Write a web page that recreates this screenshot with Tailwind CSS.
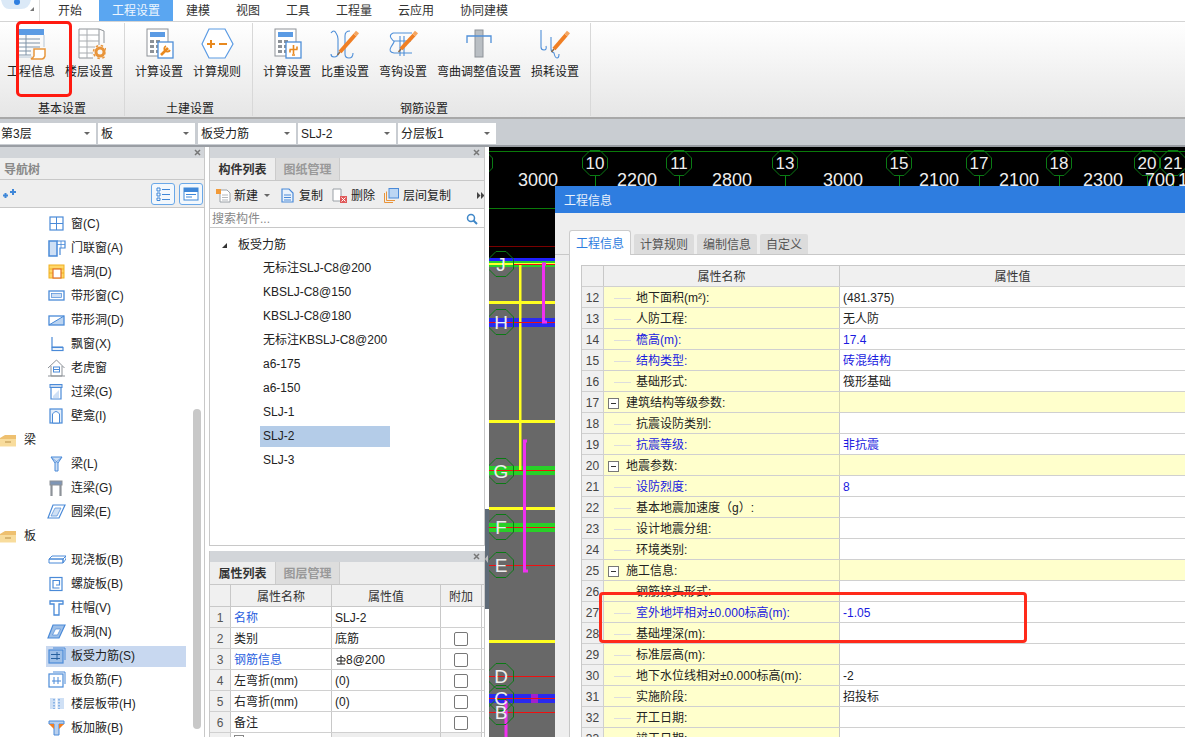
<!DOCTYPE html>
<html lang="zh"><head><meta charset="utf-8"><script src="https://cdn.jsdelivr.net/npm/@tailwindcss/browser@4"></script></head>
<body class="relative w-[1185px] h-[737px] overflow-hidden bg-white text-[12px] leading-none text-[#222] font-['Liberation_Sans','Noto_Sans_CJK_SC',sans-serif]">

<!-- menu -->
<div class="flex h-[22px] items-center border-b border-[#d4d4d4] bg-white text-[#333]">
  <div class="relative h-full w-[40px] border-r border-[#ddd]">
    <svg class="w-[36px] h-[21px]" viewBox="0 0 36 21"><path d="M1 0h30q-2 9-10 9H9Q3 9 1 0z" fill="#dbe9f7"/><circle cx="17" cy="2" r="3" fill="#2f7fe0"/><path d="M30 11l4 0 0-4z" fill="#777"/></svg>
  </div>
  <span class="ml-[18px]">开始</span>
  <span class="ml-[17px] flex h-full w-[74px] items-center justify-center bg-[#5aa6f1] text-[#eef6ff]">工程设置</span>
  <span class="ml-[13px]">建模</span><span class="ml-[26px]">视图</span><span class="ml-[26px]">工具</span><span class="ml-[26px]">工程量</span><span class="ml-[26px]">云应用</span><span class="ml-[26px]">协同建模</span>
</div>

<!-- ribbon -->
<div class="flex h-[97px] border-b-2 border-[#a8a8a8] bg-gradient-to-b from-white to-[#e6e6e6]">
  <div class="flex w-[125px] flex-col border-r border-[#d8d8d8] my-[1px]">
    <div class="flex gap-[10px] pl-[7px] pt-[4px]">
      <div class="flex w-[48px] flex-col items-center">
        <svg class="w-[34px] h-[34px]" viewBox="0 0 34 34"><rect x="4" y="2" width="26" height="6" fill="#5b9be4"/><path d="M4 8v22h14M30 8v12" fill="#fff" stroke="#b5c5d5"/><path d="M4 12h22M4 16h22M4 20h22M4 24h13M4 28h13M12 8v20" stroke="#7f93a8" fill="none"/><path d="M20 22h11v7q-1 3-3 3H17q2-1 3-3z" fill="#fff" stroke="#e8963c" stroke-width="1.5"/></svg>
        <span class="mt-[5px]">工程信息</span>
      </div>
      <div class="flex w-[48px] flex-col items-center">
        <svg class="w-[34px] h-[34px]" viewBox="0 0 34 34"><path d="M7 2h20v16M7 2v29h14" fill="#fff" stroke="#8f9499"/><path d="M7 8h20M7 14h20M7 20h16M7 26h14M15 2v29" stroke="#a8acb0" fill="none"/><path d="M27 2l5 2v12" fill="none" stroke="#8f9499"/><circle cx="28" cy="25" r="4" fill="none" stroke="#e8943a" stroke-width="3"/><circle cx="28" cy="25" r="6.5" fill="none" stroke="#e8943a" stroke-width="1.5" stroke-dasharray="2.5 2.6"/></svg>
        <span class="mt-[5px]">楼层设置</span>
      </div>
    </div>
    <span class="mt-auto mb-[1px] pl-[38px]">基本设置</span>
  </div>
  <div class="flex w-[128px] flex-col border-r border-[#d8d8d8] my-[1px]">
    <div class="flex gap-[10px] pl-[10px] pt-[4px]">
      <div class="flex w-[48px] flex-col items-center">
        <svg class="w-[34px] h-[34px]" viewBox="0 0 34 34"><rect x="5" y="2" width="21" height="27" fill="#fff" stroke="#8d9298"/><rect x="8" y="5" width="15" height="5" fill="#5b9be4"/><path d="M8 13h4v3H8zM14 13h4v3h-4zM8 18h4v3H8zM14 18h4v3h-4zM8 23h4v3H8zM14 23h4v3h-4z" fill="#8d9298"/><rect x="16" y="15" width="15" height="16" fill="#fff" stroke="#4f8fd8" stroke-width="1.3"/><path d="M19 28l7-7" stroke="#e8891f" stroke-width="2.6"/><path d="M24 19a3 3 0 1 0 4 4" fill="none" stroke="#e8891f" stroke-width="1.8"/></svg>
        <span class="mt-[5px]">计算设置</span>
      </div>
      <div class="flex w-[48px] flex-col items-center">
        <svg class="w-[34px] h-[34px]" viewBox="0 0 34 34"><path d="M9 2h16l8 15-8 14H9L2 17z" fill="#fff" stroke="#5b9be4" stroke-width="1.2"/><path d="M7 17h8M11 13v8M19 17h8" stroke="#e8891f" stroke-width="2"/></svg>
        <span class="mt-[5px]">计算规则</span>
      </div>
    </div>
    <span class="mt-auto mb-[1px] pl-[41px]">土建设置</span>
  </div>
  <div class="flex w-[338px] flex-col border-r border-[#d8d8d8] my-[1px]">
    <div class="flex gap-[10px] pl-[10px] pt-[4px]">
      <div class="flex w-[48px] flex-col items-center">
        <svg class="w-[34px] h-[34px]" viewBox="0 0 34 34"><rect x="5" y="2" width="21" height="27" fill="#fff" stroke="#8d9298"/><rect x="8" y="5" width="15" height="5" fill="#5b9be4"/><path d="M8 13h4v3H8zM14 13h4v3h-4zM8 18h4v3H8zM14 18h4v3h-4zM8 23h4v3H8zM14 23h4v3h-4z" fill="#8d9298"/><rect x="16" y="15" width="15" height="16" fill="#fff" stroke="#4f8fd8" stroke-width="1.3"/><path d="M23.5 18v9M19.5 22.5h8M20 22.5v3M27 19.5v3M22 28h3" stroke="#e8891f" stroke-width="1.6" fill="none"/></svg>
        <span class="mt-[5px]">计算设置</span>
      </div>
      <div class="flex w-[48px] flex-col items-center">
        <svg class="w-[34px] h-[34px]" viewBox="0 0 34 34"><path d="M3 6q3-4 5 0 2 3 2 6v14q0 4-4 4-3 0-3-3M22 4q-5 0-5 5v18q0 4 4 4t4-5" fill="none" stroke="#4f8fd8" stroke-width="1.1"/><path d="M12 25L27 8" stroke="#f07f24" stroke-width="4"/><path d="M27 8l2.500-3" stroke="#f5a560" stroke-width="4"/><path d="M12 25l-2.500 3" stroke="#8a6a4a" stroke-width="1.500"/></svg>
        <span class="mt-[5px]">比重设置</span>
      </div>
      <div class="flex w-[48px] flex-col items-center">
        <svg class="w-[34px] h-[34px]" viewBox="0 0 34 34"><path d="M7 6h19M7 6q-4 2-2 5t3 3-3 6q-3 5 3 6h18M7 14h18M14 9v20M18 9v20" fill="none" stroke="#4f8fd8" stroke-width="1.1"/><path d="M15 22L28 8" stroke="#f07f24" stroke-width="4"/><path d="M28 8l2.500-3" stroke="#f5a560" stroke-width="4"/><path d="M15 22l-2.500 3" stroke="#8a6a4a" stroke-width="1.500"/></svg>
        <span class="mt-[5px]">弯钩设置</span>
      </div>
      <div class="flex w-[84px] flex-col items-center">
        <svg class="w-[34px] h-[34px]" viewBox="0 0 34 34"><rect x="13" y="3" width="8" height="27" fill="#b9bec3" stroke="#8d9298"/><path d="M5 16V9h24v7" fill="none" stroke="#4f8fd8" stroke-width="1.3"/></svg>
        <span class="mt-[5px]">弯曲调整值设置</span>
      </div>
      <div class="flex w-[48px] flex-col items-center">
        <svg class="w-[34px] h-[34px]" viewBox="0 0 34 34"><path d="M3 3v17q0 3 3 3t2-4M13 10v12q0 3 3 4 1 5 3 5t2-4" fill="none" stroke="#4f8fd8" stroke-width="1.1"/><path d="M16 22L28 8" stroke="#f07f24" stroke-width="4"/><path d="M28 8l2.500-3" stroke="#f5a560" stroke-width="4"/><path d="M16 22l-2.500 3" stroke="#8a6a4a" stroke-width="1.500"/></svg>
        <span class="mt-[5px]">损耗设置</span>
      </div>
    </div>
    <span class="mt-auto mb-[1px] pl-[147px]">钢筋设置</span>
  </div>
</div>

<!-- selector bar -->
<div class="flex h-[28px] items-center gap-[2px] border-b-2 border-[#9a9ea4] bg-[#c9cdd2] pt-[3px]">
  <div class="flex h-[21px] w-[96px] items-center justify-between bg-white pl-[1px] pr-[6px]"><span>第3层</span><i class="border-x-[3px] border-t-[3px] border-x-transparent border-t-[#666]"></i></div>
  <div class="flex h-[21px] w-[97px] items-center justify-between bg-white pl-[3px] pr-[6px]"><span>板</span><i class="border-x-[3px] border-t-[3px] border-x-transparent border-t-[#666]"></i></div>
  <div class="ml-[1px] flex h-[21px] w-[98px] items-center justify-between bg-white pl-[3px] pr-[6px]"><span>板受力筋</span><i class="border-x-[3px] border-t-[3px] border-x-transparent border-t-[#666]"></i></div>
  <div class="flex h-[21px] w-[98px] items-center justify-between bg-white pl-[3px] pr-[6px]"><span>SLJ-2</span><i class="border-x-[3px] border-t-[3px] border-x-transparent border-t-[#666]"></i></div>
  <div class="flex h-[21px] w-[98px] items-center justify-between bg-white pl-[3px] pr-[6px]"><span>分层板1</span><i class="border-x-[3px] border-t-[3px] border-x-transparent border-t-[#666]"></i></div>
</div>

<!-- main -->
<div class="flex h-[590px] overflow-hidden">
  <!-- nav -->
  <div class="relative w-[205px] shrink-0 overflow-hidden border-r border-[#c8c8c8]">
    <div class="flex h-[11px] items-center justify-end bg-[#d2d5d9] pr-[3px] text-[#777]"><svg class="w-[7px] h-[7px]" viewBox="0 0 7 7"><path d="M1 1l5 5M6 1L1 6" stroke="#777" stroke-width="1.5"/></svg></div>
    <div class="flex h-[22px] items-center border-b border-[#c8c8c8] bg-[#eee] pl-[4px] pt-[2px] font-bold text-[#888]">导航树</div>
    <div class="flex h-[28px] items-center border-b border-[#c8c8c8] bg-[#eee] pl-[3px]">
      <svg class="w-[13px] h-[10px]" viewBox="0 0 13 10"><path d="M0 6.5h5M2.5 4v5M7 3h6M10 0v6" stroke="#3f87d8" stroke-width="2"/></svg>
      <span class="ml-auto flex h-[22px] w-[24px] items-center justify-center rounded-[3px] border border-[#6aa8e8] bg-[#f3f8fd]"><svg class="w-[14px] h-[14px]" viewBox="0 0 14 14"><path d="M1 1h3v3H1zM1 6h3v3H1zM1 11h3v2.500H1z" fill="none" stroke="#3f87d8"/><path d="M6 2.500h8M6 7.500h8M6 12.500h8" stroke="#3f87d8"/></svg></span>
      <span class="ml-[4px] mr-[1px] flex h-[22px] w-[24px] items-center justify-center rounded-[3px] border border-[#6aa8e8] bg-[#f3f8fd]"><svg class="w-[16px] h-[14px]" viewBox="0 0 16 14"><rect x="1" y="1" width="14" height="12" fill="#fff" stroke="#3f87d8"/><rect x="1" y="1" width="14" height="4" fill="#3f87d8"/><path d="M3 7.500h10M3 10h6" stroke="#3f87d8"/></svg></span>
    </div>
    <div class="pt-[4px]">
      <div class="flex h-6 items-center pl-[46px]"><svg class="w-[20px] h-[20px]" viewBox="0 0 20 20"><rect x="4" y="3" width="13" height="13" fill="#fff" stroke="#4a8ad8" stroke-width="1.200"/><path d="M10.500 3v13M4 9.500h13" stroke="#4a8ad8"/></svg><span class="ml-[5px]">窗(C)</span></div>
      <div class="flex h-6 items-center pl-[46px]"><svg class="w-[20px] h-[20px]" viewBox="0 0 20 20"><rect x="3" y="3" width="8" height="15" fill="#cfe0f5" stroke="#4a8ad8" stroke-width="1.500"/><path d="M11 3h8v7h-5v7" fill="none" stroke="#4a8ad8" stroke-width="1.200"/><path d="M15 3v7M11 6.500h8" stroke="#4a8ad8" stroke-width=".8"/></svg><span class="ml-[5px]">门联窗(A)</span></div>
      <div class="flex h-6 items-center pl-[46px]"><svg class="w-[20px] h-[20px]" viewBox="0 0 20 20"><rect x="3" y="3" width="15" height="13" fill="#ffd76a" stroke="#f0b020"/><path d="M3 7h15M3 11h15" stroke="#f0b020"/><rect x="7" y="7" width="8" height="9" fill="#fff" stroke="#e2702a" stroke-width="1.200"/></svg><span class="ml-[5px]">墙洞(D)</span></div>
      <div class="flex h-6 items-center pl-[46px]"><svg class="w-[20px] h-[20px]" viewBox="0 0 20 20"><rect x="3" y="5" width="15" height="9" fill="#fff" stroke="#4a8ad8" stroke-width="1.300"/><rect x="5.500" y="7.500" width="10" height="4" fill="#cfe0f5" stroke="#4a8ad8" stroke-width=".7"/></svg><span class="ml-[5px]">带形窗(C)</span></div>
      <div class="flex h-6 items-center pl-[46px]"><svg class="w-[20px] h-[20px]" viewBox="0 0 20 20"><path d="M3 14.500L18 6v9H3z" fill="#bcd4f0"/><rect x="3" y="6" width="15" height="9" fill="none" stroke="#4a8ad8" stroke-width="1.300"/><path d="M3 15L18 6" stroke="#4a8ad8"/></svg><span class="ml-[5px]">带形洞(D)</span></div>
      <div class="flex h-6 items-center pl-[46px]"><svg class="w-[20px] h-[20px]" viewBox="0 0 20 20"><path d="M6 3v10h11" fill="none" stroke="#4a8ad8" stroke-width="1.200"/><rect x="6" y="13.500" width="11" height="3" fill="#fff" stroke="#4a8ad8" stroke-width="1.200"/></svg><span class="ml-[5px]">飘窗(X)</span></div>
      <div class="flex h-6 items-center pl-[46px]"><svg class="w-[20px] h-[20px]" viewBox="0 0 20 20"><path d="M2 10l8.500-8 8 8M5 8v10h11V8M2 18h17" fill="none" stroke="#8d9298"/><rect x="7.500" y="9" width="6" height="5" fill="#fff" stroke="#4a8ad8"/><path d="M7.500 11.500h6" stroke="#4a8ad8"/></svg><span class="ml-[5px]">老虎窗</span></div>
      <div class="flex h-6 items-center pl-[46px]"><svg class="w-[20px] h-[20px]" viewBox="0 0 20 20"><rect x="4" y="2.500" width="12" height="3" fill="#c7d9f0" stroke="#4a8ad8"/><path d="M5 6v11h10V6" fill="#fff" stroke="#4a8ad8" stroke-width="1.200"/><path d="M7 14l6-6v8H7z" fill="#cfe0f5"/></svg><span class="ml-[5px]">过梁(G)</span></div>
      <div class="flex h-6 items-center pl-[46px]"><svg class="w-[20px] h-[20px]" viewBox="0 0 20 20"><rect x="4" y="3" width="12" height="14" fill="#e4eefa" stroke="#4a8ad8" stroke-width="1.200"/><path d="M6.500 17V8q3.500-5 7 0v9z" fill="#fff" stroke="#4a8ad8"/></svg><span class="ml-[5px]">壁龛(I)</span></div>
      <div class="flex h-6 items-center"><svg class="w-[16px] h-[13px]" viewBox="0 0 16 13"><path d="M0 4l5-3h11v11H0z" fill="#eec070"/><path d="M0 5h16v7.500H0z" fill="#f8dc9c"/><path d="M5 8h6" stroke="#b89048"/></svg><span class="ml-[8px]">梁</span></div>
      <div class="flex h-6 items-center pl-[46px]"><svg class="w-[20px] h-[20px]" viewBox="0 0 20 20"><path d="M5 3h11l-4 6v8H9V9z" fill="#cfe0f5" stroke="#4a8ad8"/><path d="M5 3l7 6M16 3L9 9" stroke="#4a8ad8" stroke-width=".7"/></svg><span class="ml-[5px]">梁(L)</span></div>
      <div class="flex h-6 items-center pl-[46px]"><svg class="w-[20px] h-[20px]" viewBox="0 0 20 20"><rect x="4" y="3" width="12" height="4" fill="#7e95b5" stroke="#8d9298"/><path d="M5.500 7v11M14.500 7v11" stroke="#8d9298" stroke-width="2.200"/></svg><span class="ml-[5px]">连梁(G)</span></div>
      <div class="flex h-6 items-center pl-[46px]"><svg class="w-[20px] h-[20px]" viewBox="0 0 20 20"><path d="M7 3h12l-6 13H2z" fill="#fff" stroke="#4a8ad8" stroke-width="1.200"/><path d="M9 6h6l-4 8H5z" fill="#cfe0f5" stroke="#4a8ad8" stroke-width=".7"/></svg><span class="ml-[5px]">圆梁(E)</span></div>
      <div class="flex h-6 items-center"><svg class="w-[16px] h-[13px]" viewBox="0 0 16 13"><path d="M0 4l5-3h11v11H0z" fill="#eec070"/><path d="M0 5h16v7.500H0z" fill="#f8dc9c"/><path d="M5 8h6" stroke="#b89048"/></svg><span class="ml-[8px]">板</span></div>
      <div class="flex h-6 items-center pl-[46px]"><svg class="w-[20px] h-[20px]" viewBox="0 0 20 20"><path d="M3 9l3-3h14l-3 3zM3 9h14v4H3zM17 9l3-3v3l-3 4z" fill="#fff" stroke="#4a8ad8"/></svg><span class="ml-[5px]">现浇板(B)</span></div>
      <div class="flex h-6 items-center pl-[46px]"><svg class="w-[20px] h-[20px]" viewBox="0 0 20 20"><rect x="4" y="3.500" width="12" height="13" fill="#fff" stroke="#4a8ad8" stroke-width="1.200"/><path d="M13.500 14H7V6.500h6.500V11H10" fill="none" stroke="#4a8ad8" stroke-width="1.200"/></svg><span class="ml-[5px]">螺旋板(B)</span></div>
      <div class="flex h-6 items-center pl-[46px]"><svg class="w-[20px] h-[20px]" viewBox="0 0 20 20"><path d="M4 3h13v3h-4v11H8V6H4z" fill="#fff" stroke="#4a8ad8" stroke-width="1.300"/></svg><span class="ml-[5px]">柱帽(V)</span></div>
      <div class="flex h-6 items-center pl-[46px]"><svg class="w-[20px] h-[20px]" viewBox="0 0 20 20"><path d="M7 3h12l-6 13H2z" fill="#9dbfe8" stroke="#4a8ad8" stroke-width="1.200"/><path d="M9.500 7h5l-3 6H6.500z" fill="#fff" stroke="#4a8ad8" stroke-width=".7"/></svg><span class="ml-[5px]">板洞(N)</span></div>
      <div class="flex h-6 items-center pl-[46px]"><span class="flex h-[21px] w-[140px] items-center bg-[#c8d8f0]"><svg class="w-[20px] h-[20px] shrink-0" viewBox="0 0 20 20"><path d="M7 2h12v12" fill="none" stroke="#4a8ad8"/><rect x="3" y="4" width="14" height="13" fill="#9dbfe8" stroke="#4a8ad8" stroke-width="1.200"/><path d="M5 8.500h9M5 12.500h9M11 6v8" stroke="#26609f"/></svg><span class="ml-[5px]">板受力筋(S)</span></span></div>
      <div class="flex h-6 items-center pl-[46px]"><svg class="w-[20px] h-[20px]" viewBox="0 0 20 20"><path d="M7 2h12v12" fill="none" stroke="#4a8ad8"/><rect x="3" y="4" width="14" height="13" fill="#fff" stroke="#4a8ad8" stroke-width="1.200"/><path d="M6 11h9M8 7v7M12 7v7" stroke="#4a8ad8"/></svg><span class="ml-[5px]">板负筋(F)</span></div>
      <div class="flex h-6 items-center pl-[46px]"><svg class="w-[20px] h-[20px]" viewBox="0 0 20 20"><rect x="4" y="4" width="14" height="11" fill="#cfe0f5"/><path d="M10.500 4v11" stroke="#fff" stroke-width="2"/><path d="M8 5v10M13 5v10" stroke="#4a8ad8" stroke-dasharray="1.500 1.500"/></svg><span class="ml-[5px]">楼层板带(H)</span></div>
      <div class="flex h-6 items-center pl-[46px]"><svg class="w-[20px] h-[20px]" viewBox="0 0 20 20"><path d="M3 3h15v3h-5v11H8V6H3z" fill="#b9d0ee" stroke="#4a8ad8"/><path d="M3 6h5v5zM18 6h-5v5z" fill="#f07f24"/></svg><span class="ml-[5px]">板加腋(B)</span></div>
    </div>
    <div class="absolute left-[193px] top-[262px] h-[320px] w-[8px] rounded-[4px] bg-[#c8c8c8]"></div>
  </div>

  <div class="w-[4px] shrink-0 bg-white"></div>

  <!-- middle -->
  <div class="flex w-[276px] shrink-0 flex-col">
    <div class="flex h-[399px] shrink-0 flex-col overflow-hidden border-x border-b border-[#c8c8c8]">
      <div class="flex h-[11px] shrink-0 items-center justify-end bg-[#d2d5d9] pr-[4px]"><svg class="w-[7px] h-[7px]" viewBox="0 0 7 7"><path d="M1 1l5 5M6 1L1 6" stroke="#777" stroke-width="1.500"/></svg></div>
      <div class="flex h-[23px] shrink-0 items-stretch border-b border-[#c8c8c8] bg-[#eee]">
        <span class="flex w-[65px] items-center justify-center pt-[2px] font-bold text-[#333]">构件列表</span>
        <span class="flex w-[65px] items-center justify-center border-x border-[#ccc] bg-[#ddd] pt-[2px] font-bold text-[#999]">图纸管理</span>
      </div>
      <div class="flex h-[28px] shrink-0 items-center whitespace-nowrap border-b border-[#c8c8c8] bg-[#eee] pl-[6px] pt-[2px]">
        <svg class="w-[15px] h-[15px] shrink-0" viewBox="0 0 15 15"><path d="M4 2h7l3 3v9H4z" fill="#fff" stroke="#9aa0a6"/><path d="M6 7h6M6 9.500h6M6 12h6" stroke="#b5b9bd"/><path d="M0 1h5v5H0z" fill="#f29a38"/></svg>
        <span class="ml-[3px] shrink-0">新建</span><i class="ml-[6px] border-x-[3px] border-t-[3px] border-x-transparent border-t-[#666]"></i>
        <svg class="ml-[11px] w-[13px] h-[15px] shrink-0" viewBox="0 0 13 15"><path d="M1 1h7l4 4v9H1z" fill="#eaf2fb" stroke="#4a8ad8" stroke-width="1.200"/><path d="M3 7h7M3 9.500h7M3 12h7" stroke="#4a8ad8"/></svg>
        <span class="ml-[5px] shrink-0">复制</span>
        <svg class="ml-[9px] w-[15px] h-[15px] shrink-0" viewBox="0 0 15 15"><path d="M1 1h8v12H1z" fill="#fff" stroke="#9aa0a6"/><rect x="8" y="8" width="7" height="7" fill="#e05a5a"/><path d="M9.500 9.500l4 4M13.500 9.500l-4 4" stroke="#fff"/></svg>
        <span class="ml-[4px] shrink-0">删除</span>
        <svg class="ml-[9px] w-[15px] h-[15px] shrink-0" viewBox="0 0 15 15"><path d="M.5 5v9.500H9M2.500 3.500V12.500H11" fill="none" stroke="#e8943a"/><rect x="5" y="0.500" width="9.500" height="9.500" fill="#bcd6f3" stroke="#4a8ad8"/></svg>
        <span class="ml-[4px] shrink-0">层间复制</span>
        <svg class="ml-[26px] w-[8px] h-[7px] shrink-0" viewBox="0 0 8 7"><path d="M0 0l3.500 3.500L0 7zM4 0l3.500 3.500L4 7z" fill="#444"/></svg>
      </div>
      <div class="flex h-[19px] shrink-0 items-center justify-between border-b border-[#c8c8c8] pl-[2px] pr-[6px] pt-[2px] text-[#888]"><span>搜索构件...</span><svg class="w-[12px] h-[12px]" viewBox="0 0 12 12"><circle cx="5" cy="5" r="3.500" fill="none" stroke="#3f87c8" stroke-width="1.500"/><path d="M7.500 7.500L11 11" stroke="#3f87c8" stroke-width="2"/></svg></div>
      <div class="flex h-[28px] shrink-0 items-center pl-[12px] pt-[6px]"><i class="border-l-[5px] border-b-[5px] border-l-transparent border-b-[#333]"></i><span class="ml-[11px]">板受力筋</span></div>
      <div class="flex h-6 shrink-0 items-center pl-[53px]">无标注SLJ-C8@200</div>
      <div class="flex h-6 shrink-0 items-center pl-[53px]">KBSLJ-C8@150</div>
      <div class="flex h-6 shrink-0 items-center pl-[53px]">KBSLJ-C8@180</div>
      <div class="flex h-6 shrink-0 items-center pl-[53px]">无标注KBSLJ-C8@200</div>
      <div class="flex h-6 shrink-0 items-center pl-[53px]">a6-175</div>
      <div class="flex h-6 shrink-0 items-center pl-[53px]">a6-150</div>
      <div class="flex h-6 shrink-0 items-center pl-[53px]">SLJ-1</div>
      <div class="flex h-6 shrink-0 items-center pl-[50px]"><span class="flex h-[21px] w-[130px] items-center bg-[#b4cce8] pl-[3px]">SLJ-2</span></div>
      <div class="flex h-6 shrink-0 items-center pl-[53px]">SLJ-3</div>
    </div>
    <div class="h-[5px] shrink-0 bg-white"></div>
    <div class="flex flex-1 flex-col overflow-hidden border-x border-[#c8c8c8] [&>div>span]:pt-[2px]">
      <div class="flex h-[11px] shrink-0 items-center justify-end bg-[#d2d5d9] pr-[4px]"><svg class="w-[7px] h-[7px]" viewBox="0 0 7 7"><path d="M1 1l5 5M6 1L1 6" stroke="#777" stroke-width="1.500"/></svg></div>
      <div class="flex h-[23px] shrink-0 items-stretch border-b border-[#c8c8c8] bg-[#eee]">
        <span class="flex w-[65px] items-center justify-center font-bold text-[#333]">属性列表</span>
        <span class="flex w-[65px] items-center justify-center border-x border-[#ccc] bg-[#ddd] font-bold text-[#999]">图层管理</span>
      </div>
      <div class="flex h-[22px] shrink-0 border-b border-[#c8c8c8] bg-[#f0f0f0] text-[#333]"><span class="w-[21px] border-r border-[#c8c8c8]"></span><span class="flex w-[101px] items-center justify-center border-r border-[#c8c8c8]">属性名称</span><span class="flex w-[109px] items-center justify-center border-r border-[#c8c8c8]">属性值</span><span class="flex w-[41px] items-center justify-center border-r border-[#c8c8c8]">附加</span></div>
      <div class="flex h-[21px] shrink-0 border-b border-[#d0d0d0]"><span class="flex w-[21px] items-center justify-center border-r border-[#c8c8c8] bg-[#f0f0f0] text-[#555]">1</span><span class="flex w-[101px] items-center border-r border-[#c8c8c8] pl-[3px] text-[#2a5fe0]">名称</span><span class="flex w-[109px] items-center border-r border-[#c8c8c8] pl-[3px]">SLJ-2</span><span class="flex w-[41px] items-center justify-center border-r border-[#c8c8c8]"></span></div>
      <div class="flex h-[21px] shrink-0 border-b border-[#d0d0d0]"><span class="flex w-[21px] items-center justify-center border-r border-[#c8c8c8] bg-[#f0f0f0] text-[#555]">2</span><span class="flex w-[101px] items-center border-r border-[#c8c8c8] pl-[3px]">类别</span><span class="flex w-[109px] items-center border-r border-[#c8c8c8] pl-[3px]">底筋</span><span class="flex w-[41px] items-center justify-center border-r border-[#c8c8c8]"><i class="h-[14px] w-[14px] rounded-[2px] border border-[#777] bg-white"></i></span></div>
      <div class="flex h-[21px] shrink-0 border-b border-[#d0d0d0]"><span class="flex w-[21px] items-center justify-center border-r border-[#c8c8c8] bg-[#f0f0f0] text-[#555]">3</span><span class="flex w-[101px] items-center border-r border-[#c8c8c8] pl-[3px] text-[#2a5fe0]">钢筋信息</span><span class="flex w-[109px] items-center border-r border-[#c8c8c8] pl-[4px]"><svg class="w-[10px] h-[10px] shrink-0" viewBox="0 0 10 10"><path d="M1 6V3.500q4-3 8 0V6zM5 0v9M1 9h8" fill="none" stroke="#222"/></svg>8@200</span><span class="flex w-[41px] items-center justify-center border-r border-[#c8c8c8]"><i class="h-[14px] w-[14px] rounded-[2px] border border-[#777] bg-white"></i></span></div>
      <div class="flex h-[21px] shrink-0 border-b border-[#d0d0d0]"><span class="flex w-[21px] items-center justify-center border-r border-[#c8c8c8] bg-[#f0f0f0] text-[#555]">4</span><span class="flex w-[101px] items-center border-r border-[#c8c8c8] pl-[3px]">左弯折(mm)</span><span class="flex w-[109px] items-center border-r border-[#c8c8c8] pl-[3px]">(0)</span><span class="flex w-[41px] items-center justify-center border-r border-[#c8c8c8]"><i class="h-[14px] w-[14px] rounded-[2px] border border-[#777] bg-white"></i></span></div>
      <div class="flex h-[21px] shrink-0 border-b border-[#d0d0d0]"><span class="flex w-[21px] items-center justify-center border-r border-[#c8c8c8] bg-[#f0f0f0] text-[#555]">5</span><span class="flex w-[101px] items-center border-r border-[#c8c8c8] pl-[3px]">右弯折(mm)</span><span class="flex w-[109px] items-center border-r border-[#c8c8c8] pl-[3px]">(0)</span><span class="flex w-[41px] items-center justify-center border-r border-[#c8c8c8]"><i class="h-[14px] w-[14px] rounded-[2px] border border-[#777] bg-white"></i></span></div>
      <div class="flex h-[21px] shrink-0 border-b border-[#d0d0d0]"><span class="flex w-[21px] items-center justify-center border-r border-[#c8c8c8] bg-[#f0f0f0] text-[#555]">6</span><span class="flex w-[101px] items-center border-r border-[#c8c8c8] pl-[3px]">备注</span><span class="flex w-[109px] items-center border-r border-[#c8c8c8]"></span><span class="flex w-[41px] items-center justify-center border-r border-[#c8c8c8]"><i class="h-[14px] w-[14px] rounded-[2px] border border-[#777] bg-white"></i></span></div>
      <div class="flex h-[21px] shrink-0"><span class="w-[21px] border-r border-[#c8c8c8] bg-[#f0f0f0]"></span><span class="flex w-[101px] items-start border-r border-[#c8c8c8] pl-[3px]"><i class="h-[7px] w-[10px] border border-[#888]"></i></span><span class="w-[109px] border-r border-[#c8c8c8] bg-[#eee]"></span><span class="w-[41px] border-r border-[#c8c8c8] bg-[#eee]"></span></div>
    </div>
  </div>

  <!-- splitter -->
  <div class="relative w-[4px] shrink-0 bg-white"><div class="absolute left-0 top-[362px] flex h-[100px] w-[4px] items-center bg-[#5f6b78]"><i class="border-y-[4px] border-r-[3px] border-y-transparent border-r-[#bbb]"></i></div></div>

  <!-- canvas -->
  <div class="relative flex-1 overflow-hidden bg-black">
    <svg class="absolute inset-0 h-[590px] w-[696px]" viewBox="489 147 696 590" font-family="Liberation Sans" fill="#eee">
      <defs><polygon id="h" points="-5,-12.500 5,-12.500 12.500,-5 12.500,5 5,12.500 -5,12.500 -12.500,5 -12.500,-5" fill="none" stroke="#0a7a14"/></defs>
      <rect x="489" y="258" width="66" height="479" fill="#686868"/>
      <path d="M489 151.500H1185M489 208.500H555" stroke="#0a7a0a"/>
      <path d="M489 246.500H555" stroke="#7a0000"/>
      <path d="M595.500 175V186M679.500 175V186M785.500 175V186M899.500 175V186M979.500 175V186M1059.500 175V186M1147.500 175V186M1173.500 175V186" stroke="#0a8a14"/>
      <use href="#h" x="595" y="163"/><use href="#h" x="679" y="163"/><use href="#h" x="785" y="163"/><use href="#h" x="899" y="163"/><use href="#h" x="979" y="163"/><use href="#h" x="1059" y="163"/><use href="#h" x="1147" y="163"/><use href="#h" x="1173" y="163"/><use href="#h" x="480" y="163"/>
      <g font-size="17" text-anchor="middle"><text x="595" y="169">10</text><text x="679" y="169">11</text><text x="785" y="169">13</text><text x="899" y="169">15</text><text x="979" y="169">17</text><text x="1059" y="169">18</text><text x="1147" y="169">20</text><text x="1173" y="169">21</text></g>
      <g font-size="18" text-anchor="middle"><text x="538" y="186">3000</text><text x="637" y="186">2200</text><text x="732" y="186">2800</text><text x="843" y="186">3000</text><text x="939" y="186">2100</text><text x="1019" y="186">2100</text><text x="1103" y="186">2300</text><text x="1160" y="186">700</text><text x="1183" y="186">1</text></g>
      <rect x="489" y="258" width="66" height="3" fill="#2020ff"/><rect x="489" y="261" width="66" height="6" fill="#28d028"/><rect x="489" y="263" width="66" height="2" fill="#ffff30"/>
      <rect x="489" y="318" width="66" height="9" fill="#2a2aee"/>
      <rect x="489" y="466" width="66" height="9" fill="#28d028"/><rect x="489" y="523" width="66" height="9" fill="#28d028"/><rect x="489" y="694" width="66" height="9" fill="#2a2aee"/><rect x="531" y="694" width="7" height="9" fill="#a020d0"/>
      <g fill="#ffff20"><rect x="489" y="301" width="66" height="3"/><rect x="489" y="420" width="66" height="3"/><rect x="489" y="507" width="66" height="3"/><rect x="489" y="640" width="66" height="3"/><rect x="519" y="265" width="2.500" height="205"/></g>
      <path d="M514 264.500H555M489 322.500H555M489 470.500H555M489 527.500H555M489 565.500H555M489 676.500H555M489 698.500H555M489 712.500H555" stroke="#f01010"/>
      <path d="M546 264H543.500V322H547M527 441H524.500V571H528M506 700V737" fill="none" stroke="#f030f0" stroke-width="3"/>
      <use href="#h" x="501" y="264"/><use href="#h" x="501" y="322"/><use href="#h" x="501" y="471"/><use href="#h" x="501" y="527"/><use href="#h" x="501" y="565"/><use href="#h" x="501" y="676"/><use href="#h" x="501" y="698"/><use href="#h" x="501" y="712"/>
      <g font-size="19" text-anchor="middle"><text x="501" y="271">J</text><text x="501" y="329">H</text><text x="501" y="478">G</text><text x="501" y="534">F</text><text x="501" y="572">E</text><text x="501" y="683">D</text><text x="501" y="705">C</text><text x="501" y="719">B</text></g>
    </svg>

    <!-- dialog -->
    <div class="absolute left-[66px] top-[39px] flex h-[551px] w-[630px] flex-col bg-[#eee]">
      <div class="flex h-[27px] shrink-0 items-center bg-[#2e7de0] pl-[9px] pt-[2px] text-[#e8f1fc]">工程信息</div>
      <div class="flex h-[42px] shrink-0 items-end gap-[3px] border-b border-[#c8c8c8] pl-[14px]">
        <span class="-mb-px flex h-[25px] w-[62px] items-center justify-center rounded-t-[3px] border border-b-0 border-[#ccc] bg-white pt-[2px] text-[#2e7de0]">工程信息</span>
        <span class="flex h-[20px] w-[60px] items-center justify-center rounded-t-[2px] bg-[#dcdcdc] pt-[2px] text-[#555]">计算规则</span>
        <span class="flex h-[20px] w-[60px] items-center justify-center rounded-t-[2px] bg-[#dcdcdc] pt-[2px] text-[#555]">编制信息</span>
        <span class="flex h-[20px] w-[48px] items-center justify-center rounded-t-[2px] bg-[#dcdcdc] pt-[2px] text-[#555]">自定义</span>
      </div>
      <div class="ml-[14px] flex-1 overflow-hidden border-l border-[#c8c8c8] bg-white pl-[11px] pt-[10px]">
        <div class="border-l border-t border-[#c8c8c8] [&>div>span]:pt-[2px]">
          <div class="flex h-[21px] border-b border-[#d0d0d0] bg-[#f0f0f0] text-[#333]"><span class="w-[22px] border-r border-[#c8c8c8]"></span><span class="flex w-[236px] items-center justify-center border-r border-[#c8c8c8]">属性名称</span><span class="flex flex-1 items-center justify-center">属性值</span></div>
          <div class="flex h-[21px] border-b border-[#d0d0d0]"><span class="flex w-[22px] items-center justify-center border-r border-[#d0d0d0] bg-[#f0f0f0] text-[#444]">12</span><span class="flex w-[236px] items-center border-r border-[#c8c8c8] bg-[#ffffcc] pl-[10px]"><i class="h-px w-[17px] bg-[#ddd]"></i><span class="ml-[5px]">地下面积(m²):</span></span><span class="flex flex-1 items-center pl-[3px]">(481.375)</span></div>
          <div class="flex h-[21px] border-b border-[#d0d0d0]"><span class="flex w-[22px] items-center justify-center border-r border-[#d0d0d0] bg-[#f0f0f0] text-[#444]">13</span><span class="flex w-[236px] items-center border-r border-[#c8c8c8] bg-[#ffffcc] pl-[10px]"><i class="h-px w-[17px] bg-[#ddd]"></i><span class="ml-[5px]">人防工程:</span></span><span class="flex flex-1 items-center pl-[3px]">无人防</span></div>
          <div class="flex h-[21px] border-b border-[#d0d0d0]"><span class="flex w-[22px] items-center justify-center border-r border-[#d0d0d0] bg-[#f0f0f0] text-[#444]">14</span><span class="flex w-[236px] items-center border-r border-[#c8c8c8] bg-[#ffffcc] pl-[10px] text-[#1a1ae0]"><i class="h-px w-[17px] bg-[#ddd]"></i><span class="ml-[5px]">檐高(m):</span></span><span class="flex flex-1 items-center pl-[3px] text-[#1a1ae0]">17.4</span></div>
          <div class="flex h-[21px] border-b border-[#d0d0d0]"><span class="flex w-[22px] items-center justify-center border-r border-[#d0d0d0] bg-[#f0f0f0] text-[#444]">15</span><span class="flex w-[236px] items-center border-r border-[#c8c8c8] bg-[#ffffcc] pl-[10px] text-[#1a1ae0]"><i class="h-px w-[17px] bg-[#ddd]"></i><span class="ml-[5px]">结构类型:</span></span><span class="flex flex-1 items-center pl-[3px] text-[#1a1ae0]">砖混结构</span></div>
          <div class="flex h-[21px] border-b border-[#d0d0d0]"><span class="flex w-[22px] items-center justify-center border-r border-[#d0d0d0] bg-[#f0f0f0] text-[#444]">16</span><span class="flex w-[236px] items-center border-r border-[#c8c8c8] bg-[#ffffcc] pl-[10px]"><i class="h-px w-[17px] bg-[#ddd]"></i><span class="ml-[5px]">基础形式:</span></span><span class="flex flex-1 items-center pl-[3px]">筏形基础</span></div>
          <div class="flex h-[21px] border-b border-[#d0d0d0]"><span class="flex w-[22px] items-center justify-center border-r border-[#d0d0d0] bg-[#f0f0f0] text-[#444]">17</span><span class="flex w-[236px] items-center border-r border-[#d8d8b0] bg-[#ffffcc] pl-[4px]"><span class="flex h-[11px] w-[11px] items-center justify-center border border-[#777] bg-white"><i class="h-px w-[5px] bg-[#333]"></i></span><span class="ml-[7px]">建筑结构等级参数:</span></span><span class="flex-1 bg-[#ffffcc]"></span></div>
          <div class="flex h-[21px] border-b border-[#d0d0d0]"><span class="flex w-[22px] items-center justify-center border-r border-[#d0d0d0] bg-[#f0f0f0] text-[#444]">18</span><span class="flex w-[236px] items-center border-r border-[#c8c8c8] bg-[#ffffcc] pl-[10px]"><i class="h-px w-[17px] bg-[#ddd]"></i><span class="ml-[5px]">抗震设防类别:</span></span><span class="flex-1"></span></div>
          <div class="flex h-[21px] border-b border-[#d0d0d0]"><span class="flex w-[22px] items-center justify-center border-r border-[#d0d0d0] bg-[#f0f0f0] text-[#444]">19</span><span class="flex w-[236px] items-center border-r border-[#c8c8c8] bg-[#ffffcc] pl-[10px] text-[#1a1ae0]"><i class="h-px w-[17px] bg-[#ddd]"></i><span class="ml-[5px]">抗震等级:</span></span><span class="flex flex-1 items-center pl-[3px] text-[#1a1ae0]">非抗震</span></div>
          <div class="flex h-[21px] border-b border-[#d0d0d0]"><span class="flex w-[22px] items-center justify-center border-r border-[#d0d0d0] bg-[#f0f0f0] text-[#444]">20</span><span class="flex w-[236px] items-center border-r border-[#d8d8b0] bg-[#ffffcc] pl-[4px]"><span class="flex h-[11px] w-[11px] items-center justify-center border border-[#777] bg-white"><i class="h-px w-[5px] bg-[#333]"></i></span><span class="ml-[7px]">地震参数:</span></span><span class="flex-1 bg-[#ffffcc]"></span></div>
          <div class="flex h-[21px] border-b border-[#d0d0d0]"><span class="flex w-[22px] items-center justify-center border-r border-[#d0d0d0] bg-[#f0f0f0] text-[#444]">21</span><span class="flex w-[236px] items-center border-r border-[#c8c8c8] bg-[#ffffcc] pl-[10px] text-[#1a1ae0]"><i class="h-px w-[17px] bg-[#ddd]"></i><span class="ml-[5px]">设防烈度:</span></span><span class="flex flex-1 items-center pl-[3px] text-[#1a1ae0]">8</span></div>
          <div class="flex h-[21px] border-b border-[#d0d0d0]"><span class="flex w-[22px] items-center justify-center border-r border-[#d0d0d0] bg-[#f0f0f0] text-[#444]">22</span><span class="flex w-[236px] items-center border-r border-[#c8c8c8] bg-[#ffffcc] pl-[10px]"><i class="h-px w-[17px] bg-[#ddd]"></i><span class="ml-[5px]">基本地震加速度（g）:</span></span><span class="flex-1"></span></div>
          <div class="flex h-[21px] border-b border-[#d0d0d0]"><span class="flex w-[22px] items-center justify-center border-r border-[#d0d0d0] bg-[#f0f0f0] text-[#444]">23</span><span class="flex w-[236px] items-center border-r border-[#c8c8c8] bg-[#ffffcc] pl-[10px]"><i class="h-px w-[17px] bg-[#ddd]"></i><span class="ml-[5px]">设计地震分组:</span></span><span class="flex-1"></span></div>
          <div class="flex h-[21px] border-b border-[#d0d0d0]"><span class="flex w-[22px] items-center justify-center border-r border-[#d0d0d0] bg-[#f0f0f0] text-[#444]">24</span><span class="flex w-[236px] items-center border-r border-[#c8c8c8] bg-[#ffffcc] pl-[10px]"><i class="h-px w-[17px] bg-[#ddd]"></i><span class="ml-[5px]">环境类别:</span></span><span class="flex-1"></span></div>
          <div class="flex h-[21px] border-b border-[#d0d0d0]"><span class="flex w-[22px] items-center justify-center border-r border-[#d0d0d0] bg-[#f0f0f0] text-[#444]">25</span><span class="flex w-[236px] items-center border-r border-[#d8d8b0] bg-[#ffffcc] pl-[4px]"><span class="flex h-[11px] w-[11px] items-center justify-center border border-[#777] bg-white"><i class="h-px w-[5px] bg-[#333]"></i></span><span class="ml-[7px]">施工信息:</span></span><span class="flex-1 bg-[#ffffcc]"></span></div>
          <div class="flex h-[21px] border-b border-[#d0d0d0]"><span class="flex w-[22px] items-center justify-center border-r border-[#d0d0d0] bg-[#f0f0f0] text-[#444]">26</span><span class="flex w-[236px] items-center border-r border-[#c8c8c8] bg-[#ffffcc] pl-[10px]"><i class="h-px w-[17px] bg-[#ddd]"></i><span class="ml-[5px]">钢筋接头形式:</span></span><span class="flex-1"></span></div>
          <div class="flex h-[21px] border-b border-[#d0d0d0]"><span class="flex w-[22px] items-center justify-center border-r border-[#d0d0d0] bg-[#f0f0f0] text-[#444]">27</span><span class="flex w-[236px] items-center border-r border-[#c8c8c8] bg-[#ffffcc] pl-[10px] text-[#1a1ae0]"><i class="h-px w-[17px] bg-[#ddd]"></i><span class="ml-[5px]">室外地坪相对±0.000标高(m):</span></span><span class="flex flex-1 items-center pl-[3px] text-[#1a1ae0]">-1.05</span></div>
          <div class="flex h-[21px] border-b border-[#d0d0d0]"><span class="flex w-[22px] items-center justify-center border-r border-[#d0d0d0] bg-[#f0f0f0] text-[#444]">28</span><span class="flex w-[236px] items-center border-r border-[#c8c8c8] bg-[#ffffcc] pl-[10px]"><i class="h-px w-[17px] bg-[#ddd]"></i><span class="ml-[5px]">基础埋深(m):</span></span><span class="flex-1"></span></div>
          <div class="flex h-[21px] border-b border-[#d0d0d0]"><span class="flex w-[22px] items-center justify-center border-r border-[#d0d0d0] bg-[#f0f0f0] text-[#444]">29</span><span class="flex w-[236px] items-center border-r border-[#c8c8c8] bg-[#ffffcc] pl-[10px]"><i class="h-px w-[17px] bg-[#ddd]"></i><span class="ml-[5px]">标准层高(m):</span></span><span class="flex-1"></span></div>
          <div class="flex h-[21px] border-b border-[#d0d0d0]"><span class="flex w-[22px] items-center justify-center border-r border-[#d0d0d0] bg-[#f0f0f0] text-[#444]">30</span><span class="flex w-[236px] items-center border-r border-[#c8c8c8] bg-[#ffffcc] pl-[10px]"><i class="h-px w-[17px] bg-[#ddd]"></i><span class="ml-[5px]">地下水位线相对±0.000标高(m):</span></span><span class="flex flex-1 items-center pl-[3px]">-2</span></div>
          <div class="flex h-[21px] border-b border-[#d0d0d0]"><span class="flex w-[22px] items-center justify-center border-r border-[#d0d0d0] bg-[#f0f0f0] text-[#444]">31</span><span class="flex w-[236px] items-center border-r border-[#c8c8c8] bg-[#ffffcc] pl-[10px]"><i class="h-px w-[17px] bg-[#ddd]"></i><span class="ml-[5px]">实施阶段:</span></span><span class="flex flex-1 items-center pl-[3px]">招投标</span></div>
          <div class="flex h-[21px] border-b border-[#d0d0d0]"><span class="flex w-[22px] items-center justify-center border-r border-[#d0d0d0] bg-[#f0f0f0] text-[#444]">32</span><span class="flex w-[236px] items-center border-r border-[#c8c8c8] bg-[#ffffcc] pl-[10px]"><i class="h-px w-[17px] bg-[#ddd]"></i><span class="ml-[5px]">开工日期:</span></span><span class="flex-1"></span></div>
          <div class="flex h-[21px] border-b border-[#d0d0d0]"><span class="flex w-[22px] items-center justify-center border-r border-[#d0d0d0] bg-[#f0f0f0] text-[#444]">33</span><span class="flex w-[236px] items-center border-r border-[#c8c8c8] bg-[#ffffcc] pl-[10px]"><i class="h-px w-[17px] bg-[#ddd]"></i><span class="ml-[5px]">竣工日期:</span></span><span class="flex-1"></span></div>
        </div>
      </div>
    </div>
  </div>
</div>

<!-- red annotation boxes -->
<div class="absolute left-[16px] top-[21px] h-[76px] w-[56px] rounded-[5px] border-[3px] border-[#ff1a10]"></div>
<div class="absolute left-[599px] top-[592px] h-[51px] w-[428px] rounded-[4px] border-[3px] border-[#ff2a1a]"></div>
</body></html>
